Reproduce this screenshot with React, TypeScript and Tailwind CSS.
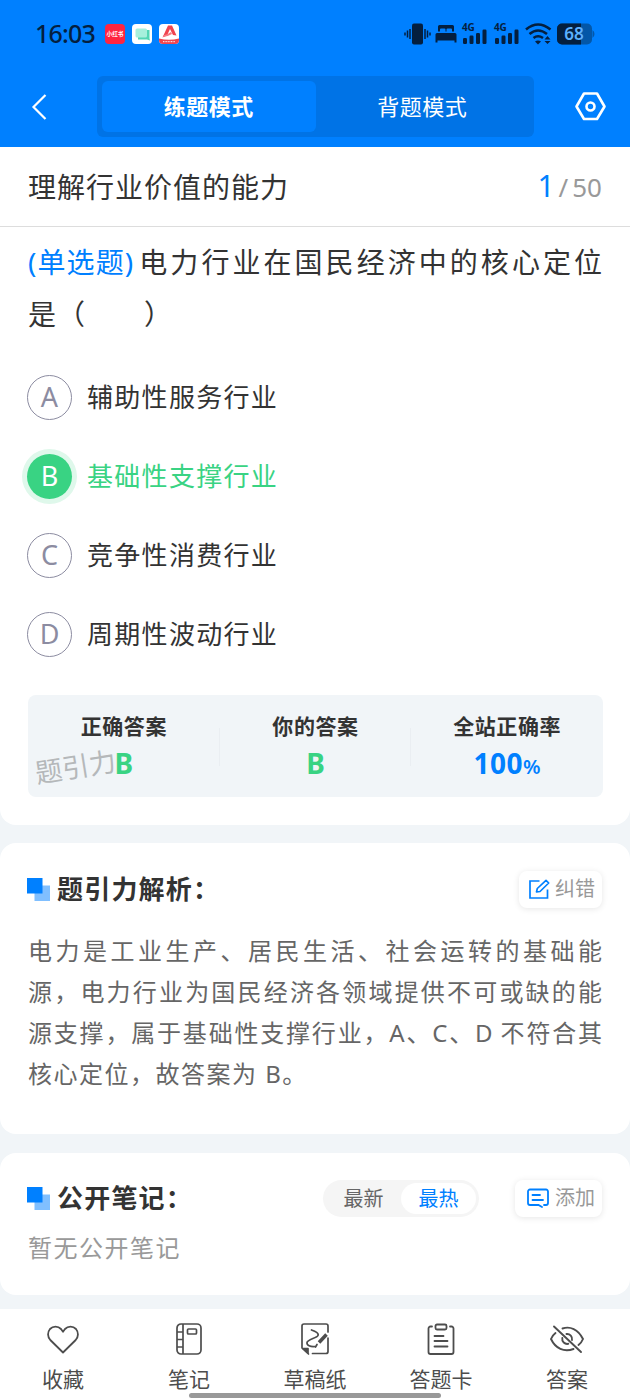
import { useState } from 'react';
import clsx from 'clsx';

const OPTIONS = [
  { key: 'A', label: '辅助性服务行业' },
  { key: 'B', label: '基础性支撑行业' },
  { key: 'C', label: '竞争性消费行业' },
  { key: 'D', label: '周期性波动行业' },
];

const CORRECT = 'B';

const ANALYSIS = [
  '电力是工业生产、居民生活、社会运转的基础能',
  '源，电力行业为国民经济各领域提供不可或缺的能',
  '源支撑，属于基础性支撑行业，A、C、D 不符合其',
];

function SignalIcon() {
  return (
    <div className="relative">
      <span className="absolute -top-px left-0 text-[10px] font-bold leading-[12px] tracking-[-0.2px] text-[#041f3f]">4G</span>
      <svg width="26" height="24" viewBox="0 0 26 24" fill="#041f3f">
        <rect x="1" y="16" width="4" height="6" rx="1.2" />
        <rect x="7.5" y="13.500" width="4" height="8.500" rx="1.2" />
        <rect x="14" y="11" width="4" height="11" rx="1.2" />
        <rect x="20.5" y="7.500" width="4" height="14.500" rx="1.2" />
      </svg>
    </div>
  );
}

function StatusBar() {
  return (
    <div className="flex h-[68px] items-center pl-[35px] pr-[35px]">
      <span className="w-[70px] whitespace-nowrap text-[25px] font-medium tracking-[-0.8px] text-[#041f3f]">16:03</span>
      <div className="flex items-center gap-[7px]">
        <svg width="20" height="20" viewBox="0 0 20 20">
          <rect width="20" height="20" rx="4" fill="#ff2440" />
          <text x="10" y="12.2" fontSize="5.6" fontWeight="700" fill="#fff" textAnchor="middle" fontFamily="Noto Sans CJK SC, sans-serif">
            小红书
          </text>
        </svg>
        <svg width="20" height="20" viewBox="0 0 20 20">
          <rect width="20" height="20" rx="4" fill="#fff" />
          <path d="M6 6h11.500v8.500l.5 2-3-1H6z" fill="#52d6b4" />
          <rect x="3.500" y="4.500" width="11.500" height="9" rx="1.500" fill="#a6f0dc" />
        </svg>
        <svg width="20" height="20" viewBox="0 0 20 20">
          <rect width="20" height="20" rx="4" fill="#fff" />
          <path d="M0 14.500q10 2.500 20 0V16a4 4 0 0 1-4 4H4a4 4 0 0 1-4-4z" fill="#f0444f" />
          <path d="M9 1.500h4l4.500 10-3.500-.5-3-6-3 6.500-4.500 2z" fill="#f0444f" />
          <path d="M4 11.500q5-1 8-3.500l1 2q-4 2.500-9 3z" fill="#f77a82" />
          <path d="M4 17.700h12" stroke="#fff" strokeWidth="1" strokeDasharray="1 .6" />
        </svg>
      </div>
      <div className="ml-auto flex items-center">
        <svg width="27" height="24" viewBox="0 0 27 24" fill="#041f3f">
          <rect x="8" y="1.500" width="11" height="21" rx="2" />
          <path d="M6 7v10M3.500 8.500v7M1 10.500v3M21 7v10M23.500 8.500v7M26 10.500v3" stroke="#041f3f" strokeWidth="1.500" />
        </svg>
        <svg className="ml-[4px]" width="22" height="20" viewBox="0 0 22 20" fill="#041f3f">
          <path d="M4.500 1h13A1.500 1.500 0 0 1 19 2.500V7.500h-2V5.500a1 1 0 0 0-1-1h-3.500a1 1 0 0 0-1 1v2h-1v-2a1 1 0 0 0-1-1H6a1 1 0 0 0-1 1v2H3v-5A1.500 1.500 0 0 1 4.500 1z" />
          <path d="M2 9h18a1.500 1.500 0 0 1 1.500 1.500v8h-2V16.500h-17v2h-2v-8A1.500 1.500 0 0 1 2 9z" />
        </svg>
        <div className="ml-[5px] flex gap-[6px]">
          <SignalIcon />
          <SignalIcon />
        </div>
        <svg className="ml-[5px]" width="27" height="22" viewBox="0 0 27 22" fill="none" stroke="#041f3f" strokeWidth="2.600">
          <path d="M1 6.500q12-10 24.500 0" />
          <path d="M4.500 11q8.500-7 17.500 0" />
          <path d="M8.500 15q4.500-3.500 9.500 0" />
          <path d="M10 18.500q3-2 6 0l-3 3z" fill="#041f3f" stroke="none" />
          <path d="M22.500 13l3 3.500h-6zM22.500 21l3-3h-6z" fill="#041f3f" stroke="none" />
        </svg>
        <svg className="ml-[5px]" width="38" height="22" viewBox="0 0 38 22">
          <rect x="0" y="0.500" width="35" height="21" rx="5" fill="#0357a8" />
          <path d="M35.500 7q2 1.500 2 4t-2 4z" fill="#0357a8" />
          <path d="M5 .5h19v21H5a5 5 0 0 1-5-5v-11a5 5 0 0 1 5-5z" fill="#041f3f" />
          <text x="17" y="17.200" fontSize="17" fontWeight="600" fill="#5bb0ff" textAnchor="middle" fontFamily="Noto Sans, sans-serif">
            68
          </text>
        </svg>
      </div>
    </div>
  );
}

function SquaresMark() {
  return (
    <svg className="-ml-px" width="23" height="23" viewBox="0 0 23 23">
      <rect x="7.500" y="7.500" width="15.500" height="15.500" fill="#80bfff" />
      <rect width="15.500" height="15.500" fill="#0080ff" />
    </svg>
  );
}

function HeartIcon() {
  return (
    <svg width="34" height="34" viewBox="0 0 34 34" fill="none" stroke="#4d4d4d" strokeWidth="1.800" strokeLinejoin="round">
      <path d="M17 30.500 4.300 18A8.300 8.300 0 0 1 4 7a7.700 7.700 0 0 1 11 0l2 2.700L19 7a7.700 7.700 0 0 1 11 0 8.300 8.300 0 0 1-.3 11z" />
    </svg>
  );
}

function NotebookIcon() {
  return (
    <svg width="34" height="34" viewBox="0 0 34 34" fill="none" stroke="#4d4d4d" strokeWidth="1.700">
      <rect x="5" y="2" width="24" height="30" rx="4" />
      <path d="M11 2v30M5 10h6M5 17.500h6M5 25h6" />
      <rect x="15.500" y="7" width="9" height="5" rx="1" />
    </svg>
  );
}

function DraftIcon() {
  return (
    <svg width="34" height="34" viewBox="0 0 34 34" fill="none" stroke="#4d4d4d" strokeWidth="1.700" strokeLinecap="round">
      <path d="M30 10V4a2 2 0 0 0-2-2H6a2 2 0 0 0-2 2v22l6.500 6M30 16v13.500a2 2 0 0 1-2 2H14.500" />
      <path d="M5 26.500h5v4.500z" fill="#4d4d4d" strokeLinejoin="round" />
      <path d="M13.500 8c4 1.500 7.500 3 6.500 5.500S9.500 17.500 9 20.500s3.500 4.500 8 4" />
      <path d="M28.500 12.500 21 20.500" strokeWidth="3.500" strokeLinecap="butt" />
      <path d="m19 22.500-1.500 2.500" />
    </svg>
  );
}

function CardIcon() {
  return (
    <svg width="34" height="34" viewBox="0 0 34 34" fill="none" stroke="#4d4d4d" strokeWidth="1.800" strokeLinecap="round">
      <path d="M8 4.500H6.500a2 2 0 0 0-2 2V30a2 2 0 0 0 2 2h21a2 2 0 0 0 2-2V6.500a2 2 0 0 0-2-2H26" />
      <rect x="11.500" y="2.500" width="11" height="5" rx="1.500" />
      <path d="M10.500 14h9M10.500 19h13M10.500 24.500h13" />
    </svg>
  );
}

function EyeOffIcon() {
  return (
    <svg width="36" height="34" viewBox="0 0 36 34" fill="none" stroke="#4d4d4d" strokeWidth="1.900" strokeLinecap="round">
      <path d="M13.500 6.500C21 4 29 7 34 17c-1 2.500-2.500 4.500-4.500 6" />
      <path d="M6.500 11C4.500 12.500 3 14.500 2 17c4.500 9.500 13 13.500 22.500 10" />
      <path d="M17.500 12a5 5 0 0 1 5.500 6M13.300 16a5 5 0 0 0 6 5.800" />
      <path d="m5 4.500 27 25.500" />
    </svg>
  );
}

const NAV = [
  { label: '收藏', icon: HeartIcon },
  { label: '笔记', icon: NotebookIcon },
  { label: '草稿纸', icon: DraftIcon },
  { label: '答题卡', icon: CardIcon },
  { label: '答案', icon: EyeOffIcon },
];

export default function App() {
  const [mode, setMode] = useState('practice');
  const [sort, setSort] = useState('hot');

  return (
    <div className="flex h-[1400px] w-[630px] flex-col overflow-hidden bg-[#f1f5f8] font-['Noto_Sans','Noto_Sans_CJK_SC',sans-serif] text-[#333] [text-spacing-trim:space-all]" lang="zh-CN">
      {/* Header */}
      <header className="h-[147px] shrink-0 bg-[#0080ff]">
        <StatusBar />
        <div className="flex items-center pt-2">
          <svg className="ml-[31px]" width="17" height="28" viewBox="0 0 17 28" fill="none" stroke="#fff" strokeWidth="2.200">
            <path d="M14.500 2 2.500 14l12 12" />
          </svg>
          <div className="ml-[49px] flex h-[61px] w-[437px] rounded-md bg-[#0073e6] p-[5px]">
            {[
              { id: 'practice', label: '练题模式' },
              { id: 'recite', label: '背题模式' },
            ].map((tab) => (
              <button
                key={tab.id}
                onClick={() => setMode(tab.id)}
                className={clsx(
                  'flex-1 rounded-md text-[22px] tracking-[0.5px] text-white',
                  mode === tab.id && 'bg-[#0080ff] font-bold'
                )}
              >
                {tab.label}
              </button>
            ))}
          </div>
          <svg className="ml-[41px]" width="31" height="29" viewBox="0 0 31 29" fill="none" stroke="#fff" strokeWidth="2.600" strokeLinejoin="round">
            <path d="M9 1.500h13l7.500 13-7.500 12.500H9L1.500 14.500z" />
            <circle cx="15.500" cy="14.500" r="4" />
          </svg>
        </div>
      </header>

      {/* Question */}
      <section className="h-[678px] shrink-0 rounded-b-2xl bg-white">
        <div className="flex h-20 items-center justify-between border-b border-[#ddd] px-7">
          <h1 className="text-[28px] leading-10 tracking-[1px]">理解行业价值的能力</h1>
          <div className="flex items-baseline text-[26px] text-[#999]">
            <span className="text-[30px] leading-10 text-[#0080ff]">1</span>
            <span className="mx-1">/</span>
            <span>50</span>
          </div>
        </div>

        <div className="px-7 pt-[9px] text-[28px] leading-[52px]">
          <p className="flex whitespace-nowrap">
            <span className="mr-[5px] tracking-[1.100px] text-[#0080ff]">(单选题)</span>
            <span className="flex-1 [text-align-last:justify]">电力行业在国民经济中的核心定位</span>
          </p>
          <p className="tracking-[1px]">是（　　）</p>
        </div>

        <ul className="mt-[18px] px-[27px]">
          {OPTIONS.map((option) => {
            const active = option.key === CORRECT;
            return (
              <li key={option.key} className="flex h-[79px] items-center">
                <span
                  className={clsx(
                    'flex size-[45px] items-center justify-center rounded-full text-[27px]',
                    active ? 'bg-[#39d383] text-white ring-[5px] ring-[#dff8eb]' : 'border-[1.5px] border-[#8c8ca1] text-[#8c8ca1]'
                  )}
                >
                  {option.key}
                </span>
                <span className={clsx('ml-[15px] text-[26px] tracking-[1.300px]', active && 'text-[#39d383]')}>{option.label}</span>
              </li>
            );
          })}
        </ul>

        <div className="relative ml-7 mr-[27px] mt-[21px] grid h-[102px] grid-cols-3 rounded-lg bg-[#f1f5f8] text-center">
          <span className="absolute left-[7px] top-[52px] -rotate-[9deg] text-[27px] leading-10 text-[#b5b8ba]">题引力</span>
          <div className="relative pt-[15px]">
            <p className="text-[21px] font-bold leading-8 tracking-[0.600px]">正确答案</p>
            <p className="text-[28px] font-bold leading-[42px] text-[#39d383]">B</p>
            <span className="absolute right-0 top-[33px] h-[38px] w-px bg-[#eaeef2]" />
          </div>
          <div className="relative pt-[15px]">
            <p className="text-[21px] font-bold leading-8 tracking-[0.600px]">你的答案</p>
            <p className="text-[28px] font-bold leading-[42px] text-[#39d383]">B</p>
            <span className="absolute right-0 top-[33px] h-[38px] w-px bg-[#eaeef2]" />
          </div>
          <div className="pt-[15px]">
            <p className="text-[21px] font-bold leading-8 tracking-[0.600px]">全站正确率</p>
            <p className="text-[28px] font-bold leading-[42px] tracking-[0.500px] text-[#0080ff]">
              100<span className="text-[20px] font-semibold">%</span>
            </p>
          </div>
        </div>
      </section>

      {/* Analysis */}
      <section className="mt-[18px] h-[291px] shrink-0 rounded-2xl bg-white px-7 pt-[26px]">
        <div className="flex h-10 items-center">
          <SquaresMark />
          <h2 className="ml-[7px] text-[26px] font-bold tracking-[1.200px]">题引力解析：</h2>
          <button className="ml-auto flex h-[37px] w-[83px] items-center justify-end gap-[5px] rounded-lg bg-white pr-[7px] text-[20px] text-[#999] shadow-[0_1px_6px_rgba(0,0,0,0.1)]">
            <svg width="21" height="21" viewBox="0 0 21 21" fill="none" stroke="#0080ff" strokeWidth="1.700">
              <path d="M10.500 2H1v17h17.500V10.500" />
              <path d="m7.500 13 .8-3.500L17 1.300l2.700 2.700L11 12.500z" strokeLinejoin="round" />
            </svg>
            纠错
          </button>
        </div>
        <div className="mt-[21px] whitespace-nowrap text-[24px] leading-[41px] text-[#666]">
          {ANALYSIS.map((line) => (
            <p key={line} className="[text-align-last:justify]">
              {line}
            </p>
          ))}
          <p className="tracking-[1.500px]">核心定位，故答案为 B。</p>
        </div>
      </section>

      {/* Notes */}
      <section className="mt-[19px] h-[142px] shrink-0 rounded-2xl bg-white px-7 pt-[25px]">
        <div className="flex h-10 items-center">
          <SquaresMark />
          <h2 className="ml-[7px] text-[26px] font-bold tracking-[1.200px]">公开笔记：</h2>
          <div className="ml-auto flex h-[37px] w-[156px] rounded-full bg-[#f5f5f5] p-[3px]">
            {[
              { id: 'new', label: '最新' },
              { id: 'hot', label: '最热' },
            ].map((item) => (
              <button
                key={item.id}
                onClick={() => setSort(item.id)}
                className={clsx('flex-1 rounded-full text-[20px] leading-[31px]', sort === item.id ? 'bg-white text-[#0080ff]' : 'text-[#666]')}
              >
                {item.label}
              </button>
            ))}
          </div>
          <button className="ml-9 flex h-[37px] w-[87px] items-center justify-end gap-[6px] rounded-lg bg-white pr-[7px] text-[20px] text-[#999] shadow-[0_1px_6px_rgba(0,0,0,0.1)]">
            <svg width="22" height="20" viewBox="0 0 22 20" fill="none" stroke="#0080ff" strokeWidth="1.800" strokeLinecap="round">
              <path d="M17 17h2a2 2 0 0 0 2-2V3.500a2 2 0 0 0-2-2H3a2 2 0 0 0-2 2V15a2 2 0 0 0 2 2h8.500l3.500 2" />
              <path d="M5.500 7h7.500M5.500 12h10.500" />
            </svg>
            添加
          </button>
        </div>
        <p className="mt-[12px] text-[24px] leading-9 tracking-[1.500px] text-[#999]">暂无公开笔记</p>
      </section>

      {/* Bottom nav */}
      <nav className="relative mt-auto grid h-[91px] shrink-0 grid-cols-5 bg-white">
        {NAV.map(({ label, icon: Icon }) => (
          <button key={label} className="flex flex-col items-center pt-[13px] text-[21px] leading-8 text-[#4d4d4d]">
            <Icon />
            <span className="mt-[7px]">{label}</span>
          </button>
        ))}
        <span className="absolute bottom-[2px] left-[189px] h-[5px] w-[252px] rounded-full bg-[#999]" />
      </nav>
    </div>
  );
}
